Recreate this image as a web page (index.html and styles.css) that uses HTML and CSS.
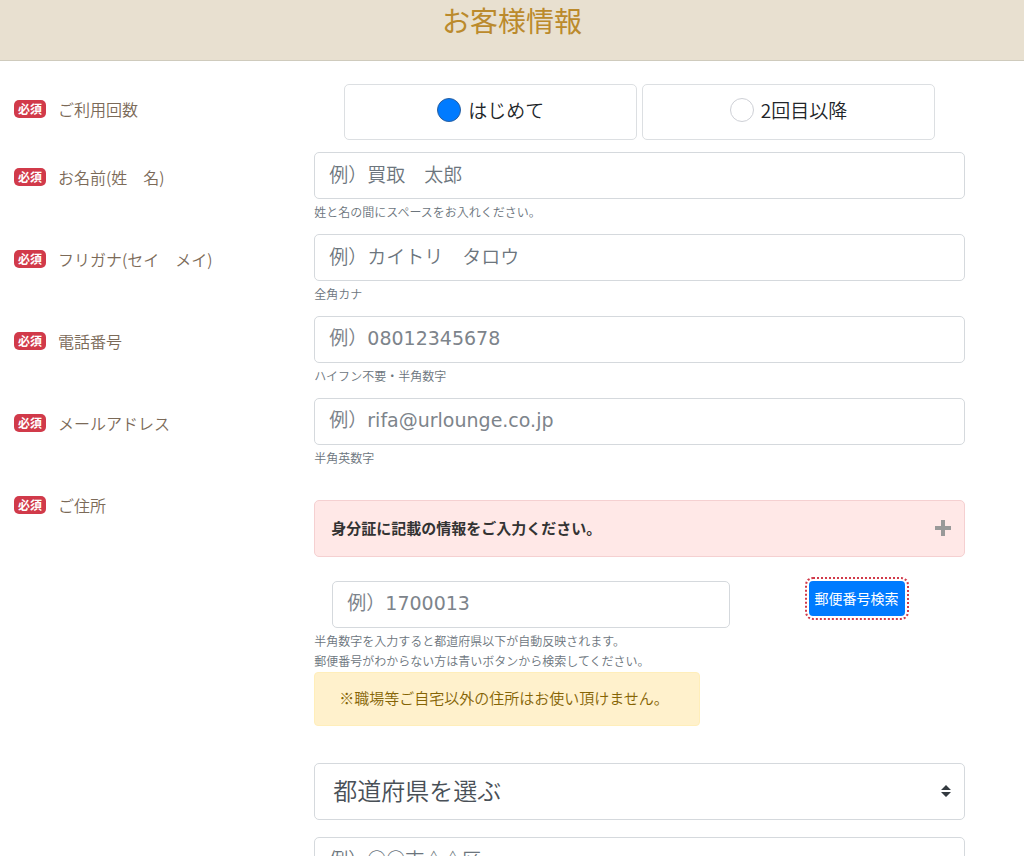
FILE: index.html
```html
<!DOCTYPE html>
<html lang="ja">
<head>
	<meta charset="UTF-8">
	<meta name="viewport" content="width=device-width, initial-scale=1">
	<title>お客様情報</title>
	<link rel="stylesheet" href="styles.css">
</head>
<body>
	<h1 class="form-title">お客様情報</h1>
	<form class="customer-form">
		<div class="form-row">
			<div class="row-label" id="times-label"><span class="badge">必須</span><span>ご利用回数</span></div>
			<div class="radio-group" role="radiogroup" aria-labelledby="times-label">
				<label class="radio-box"><input type="radio" name="times" value="1" checked>はじめて</label>
				<label class="radio-box"><input type="radio" name="times" value="2">2回目以降</label>
			</div>
		</div>
		<div class="form-row">
			<label class="row-label" for="name"><span class="badge">必須</span><span>お名前(姓　名)</span></label>
			<div class="row-field">
				<input class="form-control" type="text" id="name" placeholder="例）買取　太郎">
				<small class="help">姓と名の間にスペースをお入れください。</small>
			</div>
		</div>
		<div class="form-row">
			<label class="row-label" for="kana"><span class="badge">必須</span><span>フリガナ(セイ　メイ)</span></label>
			<div class="row-field">
				<input class="form-control" type="text" id="kana" placeholder="例）カイトリ　タロウ">
				<small class="help">全角カナ</small>
			</div>
		</div>
		<div class="form-row">
			<label class="row-label" for="tel"><span class="badge">必須</span><span>電話番号</span></label>
			<div class="row-field">
				<input class="form-control latin" type="tel" id="tel" placeholder="例）08012345678">
				<small class="help">ハイフン不要・半角数字</small>
			</div>
		</div>
		<div class="form-row">
			<label class="row-label" for="mail"><span class="badge">必須</span><span>メールアドレス</span></label>
			<div class="row-field">
				<input class="form-control latin" type="email" id="mail" placeholder="例）rifa@urlounge.co.jp">
				<small class="help">半角英数字</small>
			</div>
		</div>
		<div class="form-row">
			<label class="row-label" for="zip"><span class="badge">必須</span><span>ご住所</span></label>
			<div class="row-field">
				<button type="button" class="notice">
					<span>身分証に記載の情報をご入力ください。</span>
					<svg width="16" height="16" viewBox="0 0 16 16" aria-hidden="true"><path d="M6 0h4v6h6v4h-6v6H6v-6H0V6h6z" fill="#999"/></svg>
				</button>
				<div class="zip-group">
					<input class="form-control latin" type="text" id="zip" placeholder="例）1700013">
					<div class="zip-search">
						<button type="button" class="zip-btn">郵便番号検索</button>
					</div>
				</div>
				<small class="help">半角数字を入力すると都道府県以下が自動反映されます。<br>郵便番号がわからない方は青いボタンから検索してください。</small>
				<p class="warning">※職場等ご自宅以外の住所はお使い頂けません。</p>
				<div class="select-wrap">
					<select class="pref" id="pref" aria-label="都道府県">
						<option>都道府県を選ぶ</option>
						<option>東京都</option>
						<option>神奈川県</option>
						<option>埼玉県</option>
						<option>千葉県</option>
					</select>
					<svg class="arrows" width="10" height="12" viewBox="0 0 10 12" aria-hidden="true"><path d="M5 0l5 5H0zM5 12L0 7h10z" fill="#343a40"/></svg>
				</div>
				<input class="form-control" type="text" id="city" aria-label="市区町村" placeholder="例）○○市△△区">
			</div>
		</div>
	</form>
</body>
</html>
```
FILE: styles.css
```css
*{
	box-sizing: border-box;
}
body{
	margin: 0;
	background: #fff;
	color: #212529;
	font-family: "Noto Sans CJK JP", sans-serif;
	font-size: 15px;
	font-weight: 350;
	line-height: 24px;
}
input,
select,
button{
	font-family: inherit;
	font-weight: inherit;
	margin: 0;
}
.form-title{
	margin: 0;
	padding: 0 0 20px;
	background: #e8e0d0;
	border-bottom: 1px solid #cfcbbd;
	color: #bb8a2c;
	font-size: 28px;
	font-weight: 400;
	line-height: 40px;
	text-align: center;
}
.customer-form{
	padding: 23px 59px 0 14px;
}
.form-row{
	display: grid;
	grid-template-columns: 6fr 13fr;
	margin-bottom: 12px;
}
.row-label{
	display: flex;
	align-items: center;
	align-self: start;
	gap: 12px;
	padding-top: 13px;
	color: #7b6a58;
	font-size: 16px;
}
.badge{
	padding: 0 4px;
	border-radius: 5px;
	background: #d13a4a;
	color: #fff;
	font-size: 12px;
	font-weight: 700;
	line-height: 18px;
}

/* radio */
.radio-group{
	display: grid;
	grid-template-columns: 1fr 1fr;
	gap: 5px;
	padding: 0 30px;
}
.radio-box{
	display: flex;
	align-items: center;
	justify-content: center;
	gap: 7px;
	height: 56px;
	padding-bottom: 4px;
	border: 1px solid #dcdfe2;
	border-radius: 5px;
	font-size: 19px;
}
.radio-box input{
	appearance: none;
	width: 24px;
	height: 24px;
	border: 1px solid #ced0d6;
	border-radius: 50%;
	background: #fff;
}
.radio-box input:checked{
	border-color: #2b5f9e;
	background: #007bff;
}

/* text fields */
.form-control{
	display: block;
	width: 100%;
	height: 47px;
	padding: 0 14px 4px;
	border: 1px solid #d5d9dd;
	border-radius: 5px;
	background: #fff;
	color: #495057;
	font-size: 19px;
}
.form-control::placeholder{
	color: #6c757d;
	opacity: 1;
}
.latin{
	font-family: "DejaVu Sans", "Noto Sans CJK JP", sans-serif;
	font-weight: 400;
}
.latin::placeholder{
	color: #7d848b;
}
.help{
	display: block;
	margin-top: 3px;
	color: #6c757d;
	font-size: 12px;
	line-height: 20px;
}

/* address */
.notice{
	display: flex;
	align-items: center;
	justify-content: space-between;
	width: 100%;
	height: 57px;
	margin: 20px 0 24px;
	padding: 0 13px 2px 16px;
	border: 1px solid #f5d0d1;
	border-radius: 5px;
	background: #ffe8e7;
	color: #333;
	font-size: 15px;
	font-weight: 700;
}
.zip-group{
	display: grid;
	grid-template-columns: 11fr 6fr;
	gap: 18px;
	padding-left: 18px;
}
.zip-search{
	text-align: center;
}
.zip-btn{
	height: 35px;
	padding: 0 6px 2px;
	border: 0;
	border-radius: 4px;
	background: #007bff;
	color: #fff;
	font-size: 14px;
	font-weight: 400;
	outline: 2px dotted #d13a4a;
	outline-offset: 2px;
}
.warning{
	width: fit-content;
	margin: 1px 0 37px;
	padding: 13px 30px 15px 24px;
	border: 1px solid #ffeeba;
	border-radius: 4px;
	background: #fff1cc;
	color: #856404;
}
.select-wrap{
	position: relative;
	margin-bottom: 17px;
}
.pref{
	appearance: none;
	display: block;
	width: 100%;
	height: 57px;
	padding: 0 40px 5px 18px;
	border: 1px solid #d5d9dd;
	border-radius: 5px;
	background: #fff;
	color: #495057;
	font-size: 24px;
}
.arrows{
	position: absolute;
	top: 22px;
	right: 14px;
	pointer-events: none;
}
```
